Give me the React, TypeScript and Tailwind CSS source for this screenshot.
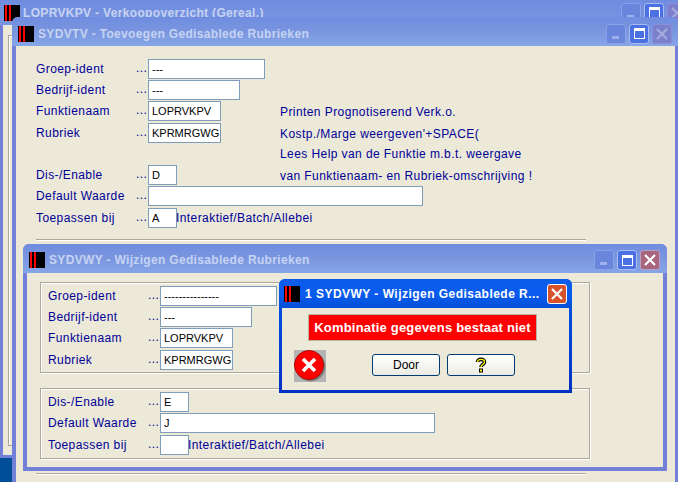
function AppIcon({ className }: { className: string }) {
  return (
    <svg viewBox="0 0 16 16" className={className}>
      <rect width="16" height="16" fill="#000" />
      <rect x="1" y="0" width="2" height="16" fill="#f00" />
      <rect x="5" y="0" width="2" height="16" fill="#f00" />
    </svg>
  );
}

function ErrorIcon() {
  return (
    <svg viewBox="0 0 32 32" className="w-8 h-8 shrink-0">
      <rect width="32" height="32" fill="#b4b4b4" />
      <circle cx="16.5" cy="16.5" r="15" fill="#808080" />
      <circle cx="15" cy="15" r="14.5" fill="#f00" stroke="#b00000" strokeWidth="1" />
      <path d="M9 9 L21 21 M21 9 L9 21" stroke="#fff" strokeWidth="3.6" />
    </svg>
  );
}

function HelpIcon() {
  return (
    <svg viewBox="0 0 12 16" className="w-3 h-4">
      <path d="M2.5 5 C2.5 1.5 9.5 1.5 9.5 5 C9.5 7.5 6 7.5 6 10" fill="none" stroke="#000" strokeWidth="3.6" />
      <rect x="4" y="11.5" width="4" height="4" fill="#000" />
      <path d="M2.5 5 C2.5 1.5 9.5 1.5 9.5 5 C9.5 7.5 6 7.5 6 10" fill="none" stroke="#ff0" strokeWidth="1.4" />
      <rect x="5" y="12.5" width="2" height="2" fill="#ff0" />
    </svg>
  );
}

function MinButton() {
  return (
    <div className="w-5 h-5 shrink-0 rounded-[3px] border border-[#8ba0e8] bg-[#6a85dc] flex items-end pl-[5px] pb-[4px]">
      <div className="w-[7px] h-[3px] bg-[#9fb0ea]" />
    </div>
  );
}

function MaxButton() {
  return (
    <div className="w-5 h-5 shrink-0 rounded-[3px] border border-[#a8bcf2] bg-[#4a70e2] flex items-center justify-center">
      <div className="w-[11px] h-[11px] border border-white border-t-[3px]" />
    </div>
  );
}

function CloseButton({ tone }: { tone: "faded" | "rose" | "active" }) {
  const box =
    tone === "faded"
      ? "border-[#8a90d8] bg-[#7c80cc]"
      : tone === "rose"
        ? "border-[#b8a0c0] bg-[#a8667e]"
        : "border-white bg-[#d8532c]";
  const stroke = tone === "faded" ? "#a6aade" : "#fff";
  return (
    <div className={`w-5 h-5 shrink-0 rounded-[3px] border flex items-center justify-center ${box}`}>
      <svg viewBox="0 0 12 12" className="w-3 h-3">
        <path d="M1 1 L11 11 M11 1 L1 11" stroke={stroke} strokeWidth="2.2" />
      </svg>
    </div>
  );
}

function TitleBar({ title, closeTone, className }: { title: string; closeTone: "faded" | "rose"; className: string }) {
  return (
    <div className={`flex items-center bg-gradient-to-b from-[#6f8ce0] via-[#7a96df] to-[#86a6e8] rounded-t-[6px] ${className}`}>
      <AppIcon className="w-4 h-4 shrink-0" />
      <span className="ml-[4px] flex-1 text-[12px] font-bold tracking-[0.33px] text-[#c6d3f2] whitespace-nowrap">{title}</span>
      <div className="flex gap-[3px]">
        <MinButton />
        <MaxButton />
        <CloseButton tone={closeTone} />
      </div>
    </div>
  );
}

function Row({
  label,
  value,
  inputClass,
  after,
  note,
  className = "",
}: {
  label: string;
  value: string;
  inputClass: string;
  after?: string;
  note?: string;
  className?: string;
}) {
  return (
    <div className={`flex items-center h-5 text-[12px] tracking-[0.42px] text-[#000099] whitespace-nowrap ${className}`}>
      <span className="w-[100px] shrink-0">{label}</span>
      <span className="w-3 shrink-0 pb-[2px]">...</span>
      <div className="w-[132px] shrink-0 flex items-center">
        <input
          readOnly
          value={value}
          className={`h-5 shrink-0 bg-white border border-[#7f9db9] pl-[3px] text-[11px] text-black tracking-normal outline-none ${inputClass}`}
        />
        {after && <span className="-ml-px">{after}</span>}
      </div>
      {note && <span className="pt-[2px]">{note}</span>}
    </div>
  );
}

function Etched({ className }: { className: string }) {
  return <div className={`h-[2px] border-t border-b border-t-[#aca899] border-b-white ${className}`} />;
}

export default function App() {
  return (
    <div className="relative w-[678px] h-[482px] overflow-hidden bg-[#004e98] font-['Liberation_Sans',sans-serif]">
      {/* achterste venster */}
      <div className="absolute left-0 top-0 w-[700px] h-[458px] flex flex-col bg-[#7280d8] px-[3px] pb-[3px]">
        <div className="h-[25px] -mx-[3px] pl-1 pr-[13px] flex items-center bg-gradient-to-b from-[#6f8ce0] to-[#7a96df]">
          <AppIcon className="w-4 h-4 shrink-0" />
          <span className="ml-[3px] flex-1 text-[12px] font-bold tracking-[0.33px] text-[#c6d3f2] whitespace-nowrap">
            LOPRVKPV - Verkoopoverzicht (Gereal.)
          </span>
          <div className="flex gap-[3px]">
            <MinButton />
            <MaxButton />
            <CloseButton tone="faded" />
          </div>
        </div>
        <div className="flex-1 bg-[#ece9d8] pt-[10px] pl-[5px] pb-[9px]">
          <div className="h-full border border-[#aca899] shadow-[inset_1px_1px_0_#fff]" />
        </div>
      </div>

      {/* SYDVTV */}
      <div className="absolute left-3 top-[17px] w-[666px] h-[480px] flex flex-col rounded-t-[6px] bg-[#7280d8]">
        <TitleBar title="SYDVTV - Toevoegen Gedisablede Rubrieken" closeTone="faded" className="h-[29px] pl-[6px] pr-[6px] pt-1" />
        <div className="flex-1 mx-[3px] ml-1 bg-[#ece9d8] pl-5 pt-[13px]">
          <Row label="Groep-ident" value="---" inputClass="w-[117px]" />
          <Row label="Bedrijf-ident" value="---" inputClass="w-[92px]" className="mt-px" />
          <Row label="Funktienaam" value="LOPRVKPV" inputClass="w-[73px]" note="Printen Prognotiserend Verk.o." className="mt-px" />
          <Row label="Rubriek" value="KPRMRGWG" inputClass="w-[73px]" note="Kostp./Marge weergeven'+SPACE(" className="mt-[2px]" />
          <div className="h-[22px] flex items-center pl-[244px] text-[12px] tracking-[0.42px] text-[#000099] whitespace-nowrap">
            Lees Help van de Funktie m.b.t. weergave
          </div>
          <Row label="Dis-/Enable" value="D" inputClass="w-[29px]" note="van Funktienaam- en Rubriek-omschrijving !" />
          <Row label="Default Waarde" value="" inputClass="w-[275px]" className="mt-px" />
          <Row label="Toepassen bij" value="A" inputClass="w-[29px]" after="Interaktief/Batch/Allebei" className="mt-[2px]" />
          <Etched className="w-[550px] mt-[11px]" />
          <Etched className="w-[550px] mt-[232px]" />
        </div>
      </div>

      {/* SYDVWY */}
      <div className="absolute left-[23px] top-[244px] w-[644px] h-[227px] flex flex-col rounded-t-[6px] bg-[#7280d8]">
        <TitleBar title="SYDVWY - Wijzigen Gedisablede Rubrieken" closeTone="rose" className="h-[29px] pl-[6px] pr-[7px] pt-[3px]" />
        <div className="flex-1 mx-1 mb-1 bg-[#ece9d8] pl-[13px] pt-[9px]">
          <div className="w-[550px] h-[91px] border border-[#aca899] shadow-[inset_1px_1px_0_#fff,1px_1px_0_#fff] pl-[7px] pt-[3px]">
            <Row label="Groep-ident" value="---------------" inputClass="w-[117px]" />
            <Row label="Bedrijf-ident" value="---" inputClass="w-[92px]" className="mt-px" />
            <Row label="Funktienaam" value="LOPRVKPV" inputClass="w-[73px]" className="mt-px" />
            <Row label="Rubriek" value="KPRMRGWG" inputClass="w-[73px]" className="mt-[2px]" />
          </div>
          <div className="w-[550px] h-[71px] mt-[15px] border border-[#aca899] shadow-[inset_1px_1px_0_#fff,1px_1px_0_#fff] pl-[7px] pt-[3px]">
            <Row label="Dis-/Enable" value="E" inputClass="w-[29px]" />
            <Row label="Default Waarde" value="J" inputClass="w-[275px]" className="mt-px" />
            <Row label="Toepassen bij" value="" inputClass="w-[29px]" after="Interaktief/Batch/Allebei" className="mt-[2px]" />
          </div>
        </div>
      </div>

      {/* melding */}
      <div className="absolute left-[279px] top-[279px] w-[293px] h-[114px] flex flex-col rounded-t-[6px] bg-gradient-to-b from-[#0058e8] to-[#0030c4]">
        <div className="h-[29px] flex items-center pl-[5px] pr-[5px] rounded-t-[6px] bg-gradient-to-b from-[#0a5ce8] via-[#0a5cf0] to-[#0350d8]">
          <AppIcon className="w-4 h-4 shrink-0" />
          <span className="ml-[5px] flex-1 min-w-0 text-[12px] font-bold tracking-[0.47px] text-white whitespace-nowrap">1 SYDVWY - Wijzigen Gedisablede R...</span>
          <CloseButton tone="active" />
        </div>
        <div className="flex-1 mx-[3px] mb-[3px] bg-[#ece9d8] flex flex-col">
          <div className="self-center ml-[-6px] mt-[6px] w-[229px] h-[27px] border border-[#b8b4a4] bg-[#f00] flex items-center justify-center text-[13px] font-bold tracking-[0.2px] text-white">
            Kombinatie gegevens bestaat niet
          </div>
          <div className="flex items-start mt-[9px] pl-3">
            <ErrorIcon />
            <div className="flex gap-[7px] ml-[46px] mt-1">
              <button className="w-[68px] h-[22px] rounded-[3px] border border-[#003c74] bg-gradient-to-b from-white to-[#ecebe5] text-[12px] text-black">
                Door
              </button>
              <button className="w-[68px] h-[22px] rounded-[3px] border border-[#003c74] bg-gradient-to-b from-white to-[#ecebe5] flex items-center justify-center">
                <HelpIcon />
              </button>
            </div>
          </div>
        </div>
      </div>
    </div>
  );
}
